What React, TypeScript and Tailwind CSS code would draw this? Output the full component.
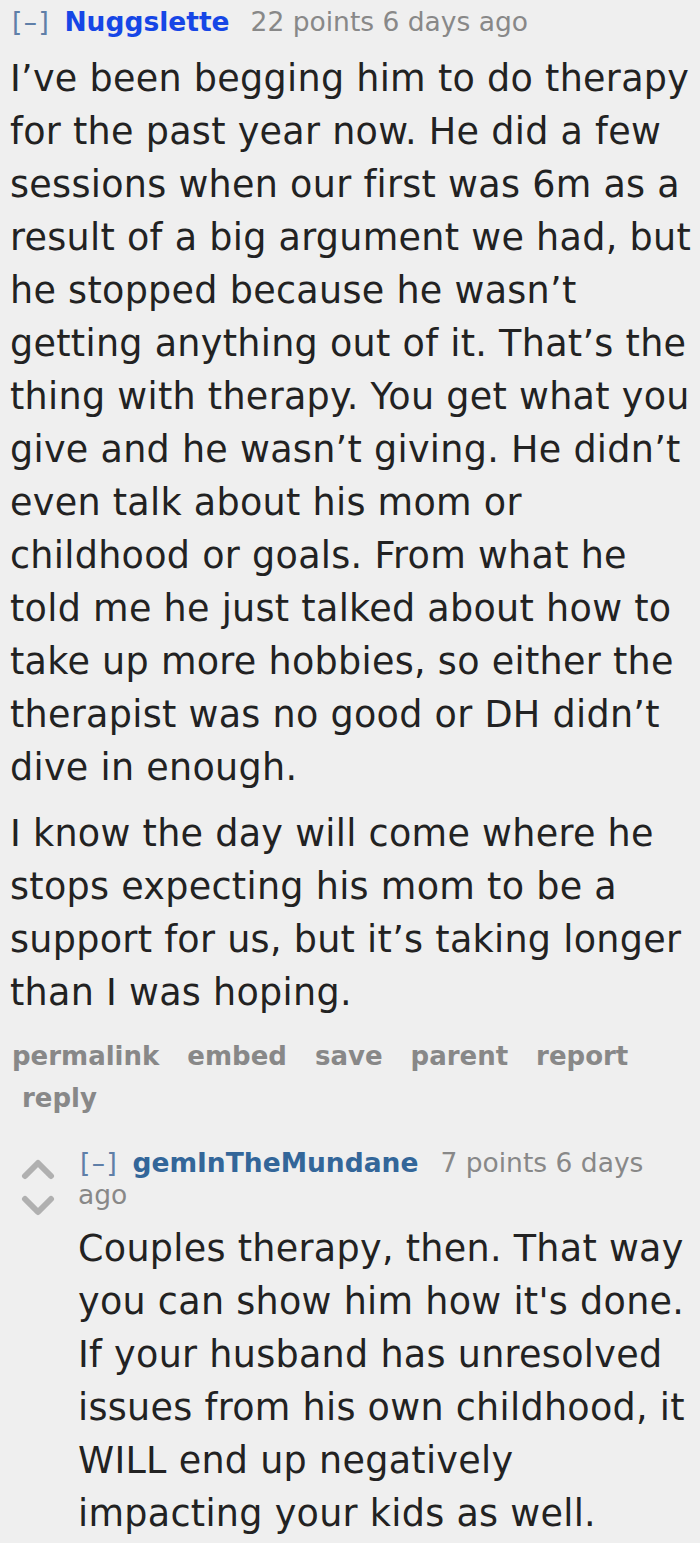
import React from 'react'

const font = { fontFamily: '"DejaVu Sans", "Liberation Sans", sans-serif' }

const Arrow = ({ up }: { up?: boolean }) => (
  <svg width="36" height="22" viewBox="0 0 36 22" className="block">
    <path
      d={up ? 'M5 18 L18 5 L31 18' : 'M5 4 L18 17 L31 4'}
      fill="none"
      stroke="#b0b0b0"
      strokeWidth="6"
      strokeLinecap="round"
      strokeLinejoin="round"
    />
  </svg>
)

const Actions = () => (
  <div className="flex flex-wrap gap-x-[28px] w-[690px] text-[26px] font-bold text-[#888] leading-[42px] pl-[12px] mt-[16px]">
    <span>permalink</span>
    <span>embed</span>
    <span>save</span>
    <span>parent</span>
    <span>report</span>
    <span className="ml-[10px]">reply</span>
  </div>
)

export default function App() {
  return (
    <div className="w-[700px] min-h-[1543px] bg-[#efefef] overflow-hidden" style={font}>
      <div className="pt-[4px] pl-[10px]">
        <div className="text-[26.5px] leading-[36px] whitespace-nowrap">
          <span className="text-[#5f7fa8] ml-[2px] tracking-[1.5px]">[–]</span>
          <span className="font-bold text-[#1646e6] ml-[14px]">Nuggslette</span>
          <span className="text-[#888] ml-[21px]">22 points 6 days ago</span>
        </div>
        <div className="text-[36.5px] tracking-[0.3px] leading-[53px] text-[#222] pr-[6px] mt-[12px]">
          <p>
            I’ve been begging him to do therapy for the past year now. He did a few sessions when our first was 6m as a result of a big argument we had, but he stopped because he wasn’t getting anything out of it. That’s the thing with therapy. You get what you give and he wasn’t giving. He didn’t even talk about his mom or childhood or goals. From what he told me he just talked about how to take up more hobbies, so either the therapist was no good or DH didn’t dive in enough.
          </p>
          <p className="mt-[13px]">
            I know the day will come where he stops expecting his mom to be a support for us, but it’s taking longer than I was hoping.
          </p>
        </div>
      </div>
      <Actions />
      <div className="flex mt-[28px] pl-[20px]">
        <div className="flex flex-col gap-[15px] pt-[11px] w-[58px] shrink-0">
          <Arrow up />
          <Arrow />
        </div>
        <div className="flex-1 pr-[8px]">
          <div className="text-[26.5px] leading-[32px]">
            <span className="text-[#5f7fa8] ml-[2px] tracking-[1.5px]">[–]</span>
            <span className="font-bold text-[#336699] ml-[14px]">gemInTheMundane</span>
            <span className="text-[#888] ml-[22px]">7 points 6 days ago</span>
          </div>
          <div className="text-[36.5px] tracking-[0.3px] leading-[53px] text-[#222] mt-[11px]">
            Couples therapy, then. That way you can show him how it's done. If your husband has unresolved issues from his own childhood, it WILL end up negatively impacting your kids as well.
          </div>
        </div>
      </div>
    </div>
  )
}
